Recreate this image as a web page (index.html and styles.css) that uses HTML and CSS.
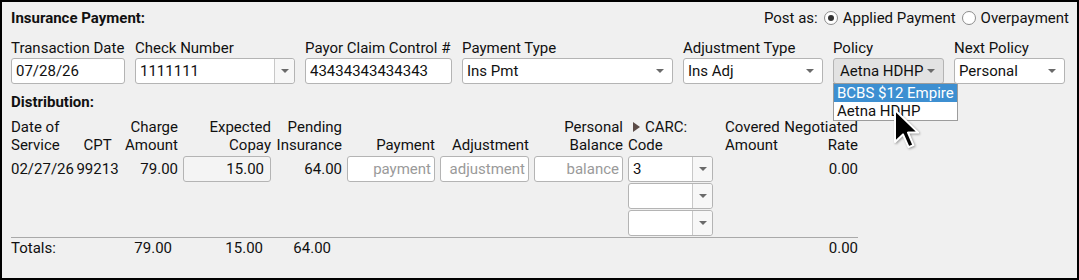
FILE: index.html
```html
<!DOCTYPE html>
<html lang="en">
<head>
    <meta charset="UTF-8">
    <title>Insurance Payment</title>
    <link rel="stylesheet" href="styles.css">
</head>
<body>
    <div class="panel">
        <div class="head">
            <h2 class="title">Insurance Payment:</h2>
            <div class="post-as">
                <span>Post as:</span>
                <span class="radio checked"></span><span>Applied Payment</span>
                <span class="radio"></span><span>Overpayment</span>
            </div>
        </div>

        <div class="fields">
            <div class="field w-date">
                <label>Transaction Date</label>
                <input class="box" type="text" value="07/28/26">
            </div>
            <div class="field w-check">
                <label>Check Number</label>
                <div class="combo"><span class="val">1111111</span><span class="btn"><i class="caret"></i></span></div>
            </div>
            <div class="field w-payor">
                <label>Payor Claim Control #</label>
                <input class="box" type="text" value="43434343434343">
            </div>
            <div class="field w-ptype">
                <label>Payment Type</label>
                <div class="select"><span class="val">Ins Pmt</span><i class="caret"></i></div>
            </div>
            <div class="field w-atype">
                <label>Adjustment Type</label>
                <div class="select"><span class="val">Ins Adj</span><i class="caret"></i></div>
            </div>
            <div class="field w-policy">
                <label>Policy</label>
                <div class="select open"><span class="val">Aetna HDHP</span><i class="caret"></i></div>
                <ul class="menu">
                    <li class="active">BCBS $12 Empire</li>
                    <li>Aetna HDHP</li>
                </ul>
            </div>
            <div class="field w-next">
                <label>Next Policy</label>
                <div class="select"><span class="val">Personal</span><i class="caret"></i></div>
            </div>
        </div>

        <h3 class="sub">Distribution:</h3>

        <div class="dist">
            <div class="th left">Date of<br>Service</div>
            <div class="th center">CPT</div>
            <div class="th">Charge<br>Amount</div>
            <div class="th">Expected<br>Copay</div>
            <div class="th">Pending<br>Insurance</div>
            <div class="th">Payment</div>
            <div class="th">Adjustment</div>
            <div class="th">Personal<br>Balance</div>
            <div class="th left carc"><span class="tri"><svg width="7" height="10" viewBox="0 0 7 10"><polygon points="0,0 7,5 0,10" fill="#5b4b47"/></svg></span>CARC:<br>Code</div>
            <div class="th left covered">Covered<br>Amount</div>
            <div class="th">Negotiated<br>Rate</div>

            <div class="td left">02/27/26</div>
            <div class="td center">99213</div>
            <div class="td">79.00</div>
            <div class="td"><input class="box ro" type="text" value="15.00" readonly></div>
            <div class="td">64.00</div>
            <div class="td"><input class="box num" type="text" placeholder="payment"></div>
            <div class="td"><input class="box num" type="text" placeholder="adjustment"></div>
            <div class="td"><input class="box num" type="text" placeholder="balance"></div>
            <div class="td"><div class="combo"><span class="val">3</span><span class="btn"><i class="caret"></i></span></div></div>
            <div class="td"></div>
            <div class="td">0.00</div>

            <div class="td c-carc"><div class="combo"><span class="val"></span><span class="btn"><i class="caret"></i></span></div></div>
            <div class="td c-carc"><div class="combo"><span class="val"></span><span class="btn"><i class="caret"></i></span></div></div>
        </div>

        <div class="totals">
            <div class="left">Totals:</div>
            <div>79.00</div>
            <div>15.00</div>
            <div>64.00</div>
            <div></div>
            <div>0.00</div>
        </div>

        <svg class="cursor" width="26" height="42" viewBox="0 0 13 21">
            <path d="M1,1 L1,17 L5,13.2 L7.8,19.6 L10.2,18.6 L7.5,12.3 L12.6,12.3 Z" fill="#000" stroke="#fff" stroke-width="1" stroke-linejoin="round"/>
        </svg>
    </div>
</body>
</html>
```

FILE: styles.css
```css
body {
    margin: 0;
    background: #fff;
    font-family: Roboto, "Liberation Sans", sans-serif;
    font-size: 15px;
    color: #111;
}
.panel {
    position: relative;
    box-sizing: border-box;
    width: 1079px;
    height: 280px;
    border: 2px solid #000;
    background: #f0f0f0;
    padding: 6px 8px 0 9px;
}
.head {
    display: flex;
    justify-content: space-between;
    align-items: center;
    height: 20px;
}
.title {
    margin: 0;
    font-size: 15px;
    font-weight: bold;
    line-height: 20px;
}
.post-as {
    display: flex;
    align-items: center;
}
.radio {
    display: inline-block;
    box-sizing: border-box;
    width: 14px;
    height: 14px;
    margin: 0 5px 0 6px;
    border: 1px solid #8c8c8c;
    border-radius: 50%;
    background: #fff;
    position: relative;
}
.radio.checked::after {
    content: "";
    position: absolute;
    left: 3px;
    top: 3px;
    width: 6px;
    height: 6px;
    border-radius: 50%;
    background: #333;
}
.fields {
    display: flex;
    gap: 10px;
    margin-top: 12px;
}
.field {
    position: relative;
    display: flex;
    flex-direction: column;
}
.field label {
    line-height: 16px;
    margin-bottom: 2px;
    white-space: nowrap;
}
.w-date { width: 114px; }
.w-check { width: 160px; }
.w-payor { width: 147px; }
.w-ptype { width: 211px; }
.w-atype { width: 140px; }
.w-policy { width: 111px; }
.w-next { width: 111px; }

.box {
    box-sizing: border-box;
    width: 100%;
    height: 26px;
    margin: 0;
    padding: 0 4px;
    border: 1px solid #b4b4b4;
    border-radius: 3px;
    background: #fff;
    font-family: inherit;
    font-size: 15px;
    color: #111;
    outline: none;
}
.box.num, .box.ro {
    text-align: right;
}
.box.num {
    padding-right: 3px;
}
.box.num::placeholder {
    color: #9a9a9a;
}
.box.ro {
    background: #f4f4f4;
    padding-right: 6px;
}
.combo, .select {
    box-sizing: border-box;
    display: flex;
    align-items: center;
    width: 100%;
    height: 26px;
    border: 1px solid #b4b4b4;
    border-radius: 3px;
    background: #fff;
}
.combo .val, .select .val {
    flex: 1;
    padding-left: 4px;
    white-space: nowrap;
}
.combo .btn {
    display: flex;
    align-items: center;
    justify-content: center;
    width: 19px;
    height: 100%;
    border-left: 1px solid #c8c8c8;
    background: #f7f7f7;
    border-radius: 0 3px 3px 0;
}
.select .caret {
    margin-right: 8px;
}
.select.open {
    background: #e2e2e2;
}
.select.open .val {
    padding-left: 6px;
}
.caret {
    width: 0;
    height: 0;
    border-left: 4px solid transparent;
    border-right: 4px solid transparent;
    border-top: 4px solid #6a6a6a;
}
.menu {
    position: absolute;
    left: 0;
    top: calc(100% - 1px);
    box-sizing: border-box;
    width: 125px;
    margin: 0;
    padding: 0;
    list-style: none;
    background: #fff;
    border: 1px solid #9c9c9c;
}
.menu li {
    height: 18px;
    line-height: 18px;
    padding-left: 3px;
    white-space: nowrap;
}
.menu li.active {
    background: #3d8fd1;
    color: #fff;
}
.sub {
    margin: 9px 0 0;
    font-size: 15px;
    font-weight: bold;
    line-height: 18px;
}
.dist {
    display: grid;
    grid-template-columns: 59px 45px 53px 88px 66px 88px 89px 89px 85px 59px 76px;
    grid-auto-rows: 26px;
    grid-template-rows: 36px;
    column-gap: 5px;
    row-gap: 1px;
    width: 847px;
    margin-top: 8px;
}
.th {
    line-height: 18px;
    text-align: right;
    align-self: end;
    white-space: nowrap;
    margin-bottom: 1px;
}
.td {
    display: flex;
    align-items: center;
    justify-content: flex-end;
    white-space: nowrap;
}
.dist > .left { text-align: left; justify-content: flex-start; }
.dist > .center { text-align: center; justify-content: center; }
.carc .tri {
    display: inline-block;
    margin: 0 5px 0 5px;
}
.covered {
    padding-left: 7px;
}
.c-carc {
    grid-column: 9;
}
.totals {
    display: grid;
    grid-template-columns: 109px 52px 91px 68px 1fr 60px;
    width: 847px;
    margin-top: 1px;
    border-top: 1px solid #a9a9a9;
    line-height: 18px;
    padding-top: 1px;
    text-align: right;
}
.totals .left {
    text-align: left;
}
.cursor {
    position: absolute;
    left: 891px;
    top: 106px;
    filter: drop-shadow(1px 1px 1px rgba(0, 0, 0, 0.35));
}
```
